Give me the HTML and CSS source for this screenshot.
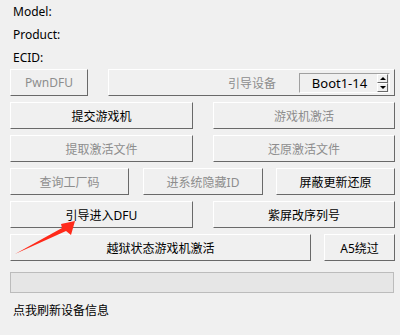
FILE: index.html
```html
<!DOCTYPE html>
<html lang="zh-CN">
  <head>
    <meta charset="UTF-8" />
    <title>设备工具</title>
    <link rel="stylesheet" href="styles.css">
  </head>
  <body>
    <div class="tool">
      <div class="info">
        <div class="info-line">Model:</div>
        <div class="info-line">Product:</div>
        <div class="info-line">ECID:</div>
      </div>

      <div class="rows">
        <div class="row">
          <button class="btn w-pwn" disabled>PwnDFU</button>
          <div class="btn boot-panel">
            <span class="boot-label">引导设备</span>
            <div class="spin">
              <span class="spin-value">Boot1-14</span>
              <div class="spin-arrows">
                <span class="spin-up"></span>
                <span class="spin-down"></span>
              </div>
            </div>
          </div>
        </div>

        <div class="row">
          <button class="btn w-half">提交游戏机</button>
          <button class="btn w-half2" disabled>游戏机激活</button>
        </div>

        <div class="row">
          <button class="btn w-half" disabled>提取激活文件</button>
          <button class="btn w-half2" disabled>还原激活文件</button>
        </div>

        <div class="row row-three">
          <button class="btn w-third" disabled>查询工厂码</button>
          <button class="btn w-third2" disabled>进系统隐藏ID</button>
          <button class="btn w-third">屏蔽更新还原</button>
        </div>

        <div class="row">
          <button class="btn w-half">引导进入DFU</button>
          <button class="btn w-half2">紫屏改序列号</button>
        </div>

        <div class="row row-three">
          <button class="btn w-wide">越狱状态游戏机激活</button>
          <button class="btn w-a5">A5绕过</button>
        </div>
      </div>

      <div class="progress"></div>

      <div class="refresh">点我刷新设备信息</div>

      <!-- red hint arrow -->
      <svg class="arrow" width="80" height="50" viewBox="0 0 80 50">
        <path d="M12 48 L59 22 L58 18 L72 15 L68 29 L63 25 Z" fill="#ff2a1a" />
      </svg>
    </div>
  </body>
</html>
```

FILE: styles.css
```css
* {
  box-sizing: border-box;
  margin: 0;
  padding: 0;
}

body {
  background: #f0f0f0;
  font-family: "Noto Sans", "Noto Sans CJK SC", sans-serif;
  font-size: 12px;
  color: #000;
}

.tool {
  position: relative;
  width: 400px;
  height: 335px;
  padding: 0 5px 0 10px;
}

.info {
  padding-top: 1px;
  padding-left: 3px;
}

.info-line {
  height: 23px;
  line-height: 21px;
}

.rows {
  display: flex;
  flex-direction: column;
  gap: 6px;
  margin-top: -1px;
}

.row {
  display: flex;
  gap: 20px;
  height: 27px;
}

.row-three {
  gap: 13px;
}

.btn {
  height: 27px;
  background: #f0f0f0;
  border: 1px solid;
  border-color: #fff #696969 #696969 #fff;
  font-family: inherit;
  font-size: 12px;
  color: #000;
  display: flex;
  align-items: center;
  justify-content: center;
}

.btn:disabled {
  color: #8d8d8d;
}

.w-pwn { width: 78px; }
.w-half { width: 183px; }
.w-half2 { width: 182px; }
.w-third { width: 119px; }
.w-third2 { width: 120px; margin-left: 1px; }
.w-wide { width: 301px; }
.w-a5 { width: 71px; }

.boot-panel {
  width: 287px;
  justify-content: flex-end;
  padding-right: 4px;
}

.boot-label {
  color: #8d8d8d;
  margin-right: 23px;
}

.spin {
  width: 91px;
  height: 20px;
  display: flex;
  align-items: center;
  border: 1px solid;
  border-color: #a0a0a0 #fff #fff #a0a0a0;
  padding-right: 1px;
}

.spin-value {
  flex: 1;
  text-align: center;
  font-size: 13px;
  padding-left: 2px;
}

.spin-arrows {
  width: 11px;
  height: 18px;
  display: flex;
  flex-direction: column;
}

.spin-up,
.spin-down {
  flex: 1;
  position: relative;
  border: 1px solid;
  border-color: #fff #696969 #696969 #fff;
}

.spin-up::after,
.spin-down::after {
  content: "";
  position: absolute;
  left: 2px;
  border-left: 3px solid transparent;
  border-right: 3px solid transparent;
}

.spin-up::after {
  top: 2px;
  border-bottom: 3px solid #000;
}

.spin-down::after {
  top: 2px;
  border-top: 3px solid #000;
}

.progress {
  width: 384px;
  height: 21px;
  margin-top: 11px;
  background: #e6e6e6;
  border: 1px solid #bcbcbc;
}

.refresh {
  margin-top: 9px;
  padding-left: 3px;
  line-height: 17px;
}

.arrow {
  position: absolute;
  left: 3px;
  top: 206px;
}
```
